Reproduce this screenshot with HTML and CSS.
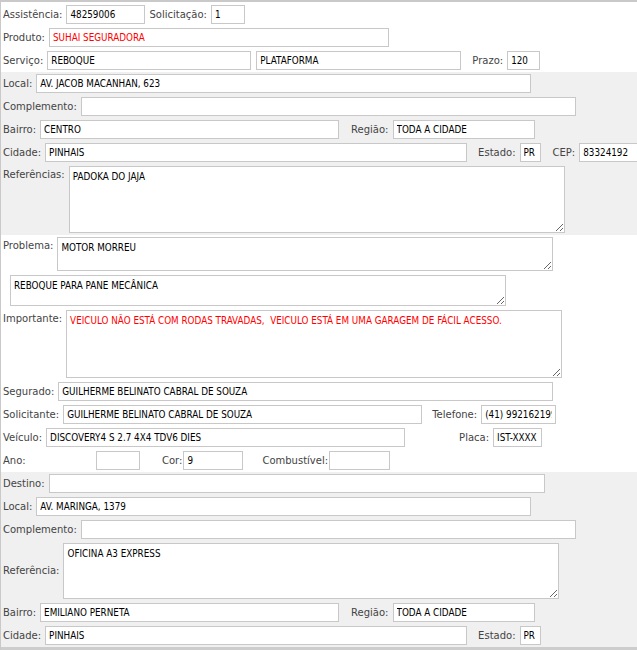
FILE: index.html
```html
<!DOCTYPE html>
<html lang="pt-BR">
<head>
<meta charset="utf-8">
<title>Ficha de atendimento</title>
<link rel="stylesheet" href="styles.css">
</head>
<body>
<div class="ficha">
  <section class="bloco primeiro">
    <div class="linha">
      <label>Assistência:</label>
      <input class="f-assistencia" value="48259006">
      <label class="sep-4">Solicitação:</label>
      <input class="f-solicitacao" value="1">
    </div>
    <div class="linha">
      <label>Produto:</label>
      <input class="f-produto vermelho" value="SUHAI SEGURADORA">
    </div>
    <div class="linha">
      <label>Serviço:</label>
      <input class="f-servico" value="REBOQUE">
      <input class="f-tipo" value="PLATAFORMA">
      <label class="sep-11">Prazo:</label>
      <input class="f-prazo" value="120">
    </div>
  </section>

  <section class="bloco cinza">
    <div class="linha">
      <label>Local:</label>
      <input class="f-local" value="AV. JACOB MACANHAN, 623">
    </div>
    <div class="linha">
      <label>Complemento:</label>
      <input class="f-local" value="">
    </div>
    <div class="linha">
      <label>Bairro:</label>
      <input class="f-bairro" value="CENTRO">
      <label class="sep-12">Região:</label>
      <input class="f-regiao" value="TODA A CIDADE">
    </div>
    <div class="linha">
      <label>Cidade:</label>
      <input class="f-cidade" value="PINHAIS">
      <label class="sep-11">Estado:</label>
      <input class="f-estado" value="PR">
      <label class="sep-12">CEP:</label>
      <input class="f-cep" value="83324192">
    </div>
    <div class="linha topo">
      <label>Referências:</label>
      <textarea class="t-referencias">PADOKA DO JAJA</textarea>
    </div>
  </section>

  <section class="bloco">
    <div class="linha topo">
      <label>Problema:</label>
      <textarea class="t-problema">MOTOR MORREU</textarea>
    </div>
    <div class="linha">
      <textarea class="t-solucao">REBOQUE PARA PANE MECÂNICA</textarea>
    </div>
    <div class="linha topo">
      <label>Importante:</label>
      <textarea class="t-importante vermelho">VEICULO NÃO ESTÁ COM RODAS TRAVADAS,  VEICULO ESTÁ EM UMA GARAGEM DE FÁCIL ACESSO.</textarea>
    </div>
    <div class="linha">
      <label>Segurado:</label>
      <input class="f-segurado" value="GUILHERME BELINATO CABRAL DE SOUZA">
    </div>
    <div class="linha">
      <label>Solicitante:</label>
      <input class="f-solicitante" value="GUILHERME BELINATO CABRAL DE SOUZA">
      <label class="sep-10">Telefone:</label>
      <input class="f-telefone" value="(41) 992162199">
    </div>
    <div class="linha">
      <label>Veículo:</label>
      <input class="f-veiculo" value="DISCOVERY4 S 2.7 4X4 TDV6 DIES">
      <label class="sep-54">Placa:</label>
      <input class="f-placa" value="IST-XXXX">
    </div>
    <div class="linha">
      <label class="l-ano">Ano:</label>
      <input class="f-ano" value="">
      <label class="sep-22 colado">Cor:</label>
      <input class="f-cor" value="9">
      <label class="sep-19 colado">Combustível:</label>
      <input class="f-combustivel" value="">
    </div>
  </section>

  <section class="bloco cinza">
    <div class="linha">
      <label>Destino:</label>
      <input class="f-destino" value="">
    </div>
    <div class="linha">
      <label>Local:</label>
      <input class="f-local" value="AV. MARINGA, 1379">
    </div>
    <div class="linha">
      <label>Complemento:</label>
      <input class="f-local" value="">
    </div>
    <div class="linha">
      <label>Referência:</label>
      <textarea class="t-referencia">OFICINA A3 EXPRESS</textarea>
    </div>
    <div class="linha">
      <label>Bairro:</label>
      <input class="f-bairro" value="EMILIANO PERNETA">
      <label class="sep-12">Região:</label>
      <input class="f-regiao" value="TODA A CIDADE">
    </div>
    <div class="linha">
      <label>Cidade:</label>
      <input class="f-cidade" value="PINHAIS">
      <label class="sep-11">Estado:</label>
      <input class="f-estado" value="PR">
    </div>
  </section>
</div>
</body>
</html>
```

FILE: styles.css
```css
* {
  box-sizing: border-box;
}

html,
body {
  margin: 0;
  padding: 0;
  background: #fff;
  overflow: hidden;
}

.ficha {
  width: 680px;
  border-top: 2px solid #c9c9c9;
  border-left: 1px solid #c9c9c9;
  border-bottom: 8px solid #cdcdcd;
}

.bloco {
  padding-left: 2px;
}

.bloco.primeiro {
  padding-top: 1px;
}

.bloco.cinza {
  background: #f0f0f0;
}

.linha {
  display: flex;
  align-items: center;
  padding: 2px 0;
}

.linha.topo {
  align-items: flex-start;
}

.linha.topo label {
  margin-top: 3px;
}

label {
  font-family: "DejaVu Sans", Verdana, sans-serif;
  font-size: 10px;
  line-height: 12px;
  color: #444;
  white-space: nowrap;
  margin-right: 4px;
}

label.colado {
  margin-right: 1px;
}

.sep-4 { margin-left: 4px; }
.sep-10 { margin-left: 10px; }
.sep-11 { margin-left: 11px; }
.sep-12 { margin-left: 12px; }
.sep-19 { margin-left: 19px; }
.sep-22 { margin-left: 22px; }
.sep-54 { margin-left: 54px; }

.l-ano {
  width: 89px;
}

input,
textarea {
  font-family: "DejaVu Sans Condensed", "DejaVu Sans", Tahoma, sans-serif;
  font-stretch: condensed;
  font-size: 9.8px;
  color: #000;
  background: #fff;
  border: 1px solid #c8c8c8;
  border-radius: 0;
  margin: 0;
  outline: none;
}

input {
  height: 19px;
  padding: 0 3px;
  flex: none;
}

textarea {
  display: block;
  flex: none;
  padding: 4px 3px;
  line-height: 12px;
  resize: both;
  overflow: auto;
}

.vermelho {
  color: #f00;
}

.f-assistencia { width: 79px; }
.f-solicitacao { width: 34px; }
.f-produto { width: 340px; }
.f-servico { width: 204px; }
.f-tipo { width: 205px; margin-left: 5px; }
.f-prazo { width: 33px; }
.f-local { width: 495px; }
.f-bairro { width: 299px; }
.f-regiao { width: 142px; }
.f-cidade { width: 422px; }
.f-estado { width: 21px; }
.f-cep { width: 80px; }
.f-segurado { width: 495px; }
.f-solicitante { width: 359px; }
.f-telefone { width: 75px; }
.f-veiculo { width: 359px; }
.f-placa { width: 49px; }
.f-ano { width: 44px; }
.f-cor { width: 60px; }
.f-combustivel { width: 61px; }
.f-destino { width: 496px; }

.t-referencias { width: 496px; height: 67px; }
.t-problema { width: 496px; height: 34px; }
.t-solucao { width: 496px; height: 31px; margin-left: 7px; }
.t-importante { width: 496px; height: 68px; }
.t-referencia { width: 496px; height: 56px; }
```
